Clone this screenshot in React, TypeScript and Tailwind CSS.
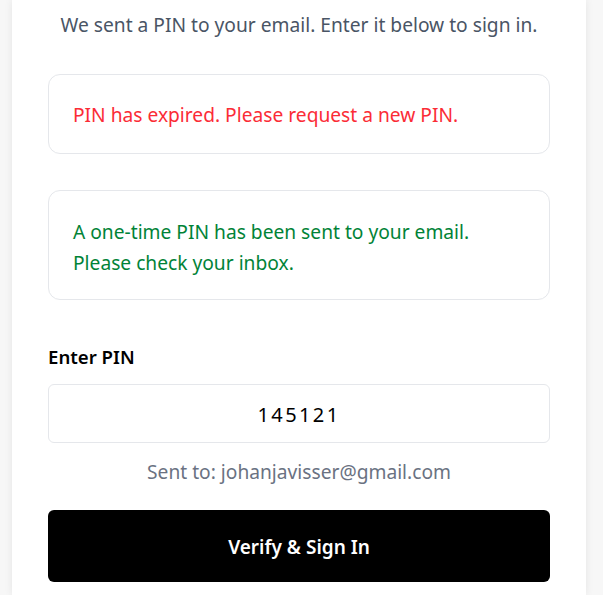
export default function App() {
  return (
    <div className="min-h-screen bg-[#f7f7f7] font-['Noto_Sans',sans-serif]">
      <div className="ml-[12px] w-[574px] bg-white px-[36px] pt-[8px] pb-[13px] shadow-[0_0_8px_rgba(0,0,0,0.08)]">
        <p className="text-center text-[19.2px] leading-[34px] text-gray-600">
          We sent a PIN to your email. Enter it below to sign in.
        </p>

        <div className="mt-[32px] flex h-[80px] items-center rounded-xl border border-gray-200 px-[24px] pt-[3px]">
          <p className="text-[19.2px] text-red-500">PIN has expired. Please request a new PIN.</p>
        </div>

        <div className="mt-[36px] flex h-[110px] items-center rounded-xl border border-gray-200 px-[24px] pt-[4px]">
          <p className="text-[19.2px] leading-[31px] text-green-700">
            A one-time PIN has been sent to your email.
            <br />
            Please check your inbox.
          </p>
        </div>

        <label className="mt-[43px] block text-[18.6px] leading-[28px] font-semibold text-black">Enter PIN</label>
        <input
          readOnly
          value="145121"
          className="mt-[13px] block h-[59px] w-full rounded-md border border-gray-200 pt-[2px] text-center text-[20px] tracking-[0.12em] text-black outline-none"
        />

        <p className="mt-[15px] text-center text-[19.2px] leading-[28px] text-gray-500">
          Sent to: johanjavisser@gmail.com
        </p>

        <button className="mt-[24px] flex h-[72px] w-full items-center justify-center rounded-md bg-black pt-[3px] text-[19px] font-semibold text-white">
          Verify &amp; Sign In
        </button>
      </div>
    </div>
  )
}
